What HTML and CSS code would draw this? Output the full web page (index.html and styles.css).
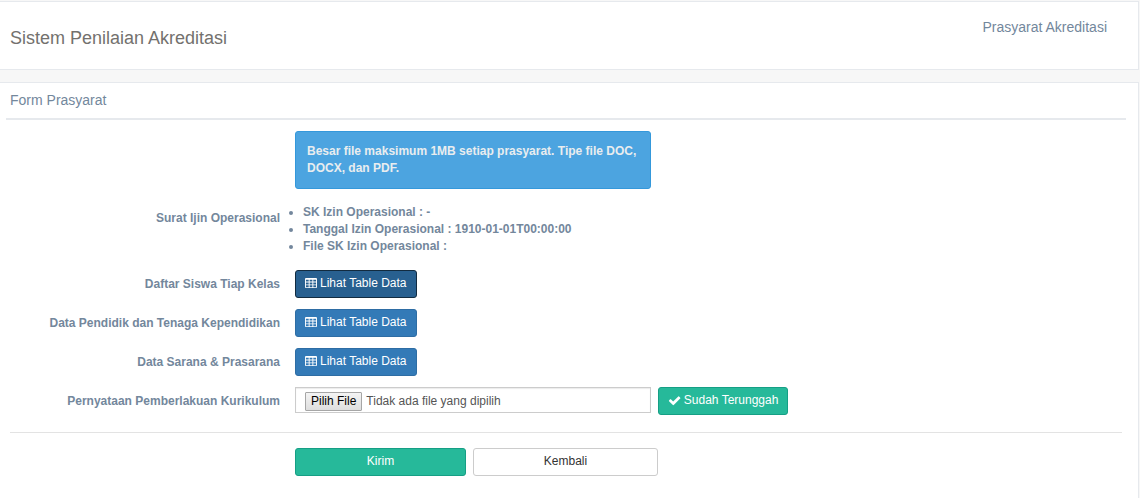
FILE: index.html
```html
<!DOCTYPE html>
<html lang="id">
<head>
<meta charset="utf-8">
<meta name="viewport" content="width=device-width, initial-scale=1">
<title>Sistem Penilaian Akreditasi</title>
<link rel="stylesheet" href="styles.css">
</head>
<body>
<svg class="sprite" aria-hidden="true">
  <symbol id="icon-table" viewBox="0 0 1664 1664">
    <path fill="currentColor" fill-rule="evenodd" d="M160 128h1344q66 0 113 47t47 113v1088q0 66-47 113t-113 47H160q-66 0-113-47T0 1376V288q0-66 47-113t113-47zM128 384v256h384V384zM640 384v256h384V384zM1152 384v256h384V384zM128 768v256h384V768zM640 768v256h384V768zM1152 768v256h384V768zM128 1152v256h384v-256zM640 1152v256h384v-256zM1152 1152v256h384v-256z"/>
  </symbol>
  <symbol id="icon-check" viewBox="64 64 1664 1664">
    <path fill="currentColor" d="M1671 566q0 28-20 48l-724 724-136 136q-20 20-48 20t-48-20l-136-136-362-362q-20-20-20-48t20-48l136-136q20-20 48-20t48 20l294 295 656-657q20-20 48-20t48 20l136 136q20 20 20 48z"/>
  </symbol>
</svg>

<header class="panel header">
  <h1 class="header-title">Sistem Penilaian Akreditasi</h1>
  <a class="header-link" href="#prasyarat">Prasyarat Akreditasi</a>
</header>

<main class="panel content" id="prasyarat">
  <h2 class="panel-title">Form Prasyarat</h2>
  <form class="form">
    <div class="row">
      <span class="row-label"></span>
      <div class="field alert" role="alert">Besar file maksimum 1MB setiap prasyarat. Tipe file DOC, DOCX, dan PDF.</div>
    </div>
    <div class="row">
      <span class="row-label row-label-list" id="lbl-surat">Surat Ijin Operasional</span>
      <ul class="field details" aria-labelledby="lbl-surat">
        <li>SK Izin Operasional : -</li>
        <li>Tanggal Izin Operasional : 1910-01-01T00:00:00</li>
        <li>File SK Izin Operasional :</li>
      </ul>
    </div>
    <div class="row">
      <label class="row-label" for="siswa">Daftar Siswa Tiap Kelas</label>
      <button class="btn btn-primary active" id="siswa" type="button"><svg class="icon"><use href="#icon-table"/></svg>Lihat Table Data</button>
    </div>
    <div class="row">
      <label class="row-label" for="pendidik">Data Pendidik dan Tenaga Kependidikan</label>
      <button class="btn btn-primary" id="pendidik" type="button"><svg class="icon"><use href="#icon-table"/></svg>Lihat Table Data</button>
    </div>
    <div class="row">
      <label class="row-label" for="sarana">Data Sarana &amp; Prasarana</label>
      <button class="btn btn-primary" id="sarana" type="button"><svg class="icon"><use href="#icon-table"/></svg>Lihat Table Data</button>
    </div>
    <div class="row">
      <label class="row-label" for="kurikulum">Pernyataan Pemberlakuan Kurikulum</label>
      <label class="field file">
        <input class="file-input" id="kurikulum" type="file">
        <span class="file-button">Pilih File</span>
        <span>Tidak ada file yang dipilih</span>
      </label>
      <button class="btn btn-success" type="button"><svg class="icon icon-wide"><use href="#icon-check"/></svg>Sudah Terunggah</button>
    </div>
    <hr class="divider">
    <div class="row">
      <span class="row-label"></span>
      <button class="btn btn-success btn-submit" type="submit">Kirim</button>
      <button class="btn btn-default btn-back" type="button">Kembali</button>
    </div>
  </form>
</main>
</body>
</html>
```
FILE: styles.css
```css
* {
  box-sizing: border-box;
}

body {
  display: flex;
  flex-direction: column;
  gap: 12px;
  min-height: 100vh;
  margin: 0;
  padding: 1px 1px 0 0;
  background: #f7f7f7;
  color: #73879c;
  font: 12px/17px "Liberation Sans", Arial, sans-serif;
}

.sprite {
  position: absolute;
  width: 0;
  height: 0;
}

.panel {
  background: #fff;
  border: 1px solid #e6e9ed;
  border-left: 0;
}

.header {
  display: flex;
  justify-content: space-between;
  align-items: flex-start;
  padding: 16px 31px 16px 10px;
}

.header-title {
  margin: 10px 0 5px;
  color: #73716e;
  font-size: 18px;
  font-weight: 400;
  line-height: 20px;
}

.header-link {
  color: #73879c;
  font-size: 14px;
  line-height: 18px;
  text-decoration: none;
}

.content {
  flex: 1;
  border-bottom: 0;
  padding: 0 12px 0 6px;
}

.panel-title {
  margin: 0;
  padding: 9px 4px;
  border-bottom: 2px solid #e6e9ed;
  font-size: 14px;
  font-weight: 400;
  line-height: 17px;
}

.form {
  display: flex;
  flex-direction: column;
  gap: 11px;
  padding: 11px 4px 22px;
}

.row {
  display: flex;
  align-items: flex-start;
  gap: 7px;
}

.row-label {
  flex: none;
  width: 25%;
  padding: 6px 8px 0 0;
  font-weight: 700;
  text-align: right;
}

.row-label-list {
  padding-top: 10px;
}

.field {
  flex: none;
  width: 32%;
}

.alert {
  min-height: 58px;
  padding: 11px;
  border: 1px solid #3498db;
  border-radius: 3px;
  background: #4ca4e0;
  color: #e9edef;
  font-weight: 700;
}

.details {
  margin: 4px 0;
  padding-left: 8px;
  font-weight: 700;
}

.btn {
  display: inline-flex;
  align-items: center;
  justify-content: center;
  gap: 3px;
  height: 28px;
  padding: 0 9px 2px;
  border: 1px solid transparent;
  border-radius: 3px;
  font: inherit;
}

.btn-primary {
  border-color: #2e6da4;
  background: #337ab7;
  color: #fff;
}

.btn-primary.active {
  border-color: #122b40;
  background: #286090;
}

.btn-success {
  border-color: #169f85;
  background: #26b99a;
  color: #fff;
}

.btn-default {
  border-color: #ccc;
  background: #fff;
  color: #333;
}

.btn-submit {
  width: 171px;
}

.btn-back {
  width: 185px;
}

.icon {
  width: 12px;
  height: 12px;
}

.icon-wide {
  width: 13px;
  height: 13px;
}

.file {
  display: flex;
  align-items: center;
  gap: 4px;
  height: 26px;
  padding: 2px 9px 0;
  border: 1px solid #ccc;
  box-shadow: inset 0 1px 1px rgba(0, 0, 0, 0.08);
  color: #555;
}

.file-input {
  position: absolute;
  width: 1px;
  height: 1px;
  opacity: 0;
}

.file-button {
  padding: 0 5px;
  border: 1px solid #a6a6a6;
  border-radius: 1px;
  background: linear-gradient(#f4f4f4, #dedede);
  color: #000;
}

.divider {
  width: 100%;
  margin: 6px 0 4px;
  border: 0;
  border-top: 1px solid #e3e3e3;
}
```
